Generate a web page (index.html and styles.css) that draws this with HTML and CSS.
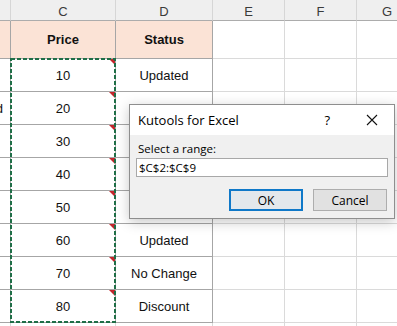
FILE: index.html
```html
<!DOCTYPE html>
<html lang="en">
<head>
    <meta charset="UTF-8">
    <title>Kutools - Select a range</title>
    <link rel="stylesheet" href="styles.css">
</head>
<body>
    <div class="sheet">
        <div class="grid">
            <!-- column headers -->
            <div class="colhead"></div>
            <div class="colhead">C</div>
            <div class="colhead">D</div>
            <div class="colhead">E</div>
            <div class="colhead">F</div>
            <div class="colhead last">G</div>

            <!-- row 1 -->
            <div class="cell th"></div>
            <div class="cell th">Price</div>
            <div class="cell th">Status</div>
            <div class="cell"></div>
            <div class="cell"></div>
            <div class="cell last"></div>

            <!-- rows 2-9 (D3:D6 sit under the dialog) -->
            <div class="cell tb"></div>
            <div class="cell tb price">10<span class="note"></span></div>
            <div class="cell tb status">Updated</div>
            <div class="cell"></div><div class="cell"></div><div class="cell last"></div>

            <div class="cell tb clip">Keyboard</div>
            <div class="cell tb price">20<span class="note"></span></div>
            <div class="cell tb status"></div>
            <div class="cell"></div><div class="cell"></div><div class="cell last"></div>

            <div class="cell tb"></div>
            <div class="cell tb price">30<span class="note"></span></div>
            <div class="cell tb status"></div>
            <div class="cell"></div><div class="cell"></div><div class="cell last"></div>

            <div class="cell tb"></div>
            <div class="cell tb price">40<span class="note"></span></div>
            <div class="cell tb status"></div>
            <div class="cell"></div><div class="cell"></div><div class="cell last"></div>

            <div class="cell tb"></div>
            <div class="cell tb price">50<span class="note"></span></div>
            <div class="cell tb status"></div>
            <div class="cell"></div><div class="cell"></div><div class="cell last"></div>

            <div class="cell tb"></div>
            <div class="cell tb price">60<span class="note"></span></div>
            <div class="cell tb status">Updated</div>
            <div class="cell"></div><div class="cell"></div><div class="cell last"></div>

            <div class="cell tb"></div>
            <div class="cell tb price">70<span class="note"></span></div>
            <div class="cell tb status">No Change</div>
            <div class="cell"></div><div class="cell"></div><div class="cell last"></div>

            <div class="cell tb"></div>
            <div class="cell tb price">80<span class="note"></span></div>
            <div class="cell tb status">Discount</div>
            <div class="cell"></div><div class="cell"></div><div class="cell last"></div>

            <!-- partial row 10 -->
            <div class="cell"></div>
            <div class="cell"></div>
            <div class="cell"></div>
            <div class="cell"></div><div class="cell"></div><div class="cell last"></div>
        </div>

        <!-- copy marquee around C2:C9 -->
        <svg class="marquee" width="106" height="265" viewBox="0 0 106 265">
            <rect x="1" y="1" width="104" height="263" fill="none" stroke="#1f6e47" stroke-width="2" stroke-dasharray="4 2"/>
        </svg>

        <div class="dialog">
            <div class="dialog-title">
                <span class="title-text">Kutools for Excel</span>
                <span class="help">?</span>
                <svg class="close" width="12" height="12" viewBox="0 0 12 12">
                    <path d="M1 1 L11 11 M11 1 L1 11" stroke="#111" stroke-width="1.1" fill="none"/>
                </svg>
            </div>
            <div class="dialog-body">
                <div class="label">Select a range:</div>
                <div class="range-input">$C$2:$C$9</div>
                <div class="buttons">
                    <button class="btn default">OK</button>
                    <button class="btn">Cancel</button>
                </div>
            </div>
        </div>
    </div>
</body>
</html>
```

FILE: styles.css
```css
body {
    margin: 0;
    background: #fff;
    overflow: hidden;
}
.sheet {
    position: relative;
    width: 397px;
    height: 326px;
    overflow: hidden;
    font-family: "Liberation Sans", Arial, sans-serif;
    font-size: 13px;
    color: #111;
}
.grid {
    display: grid;
    grid-template-columns: 11px 105px 97px 72px 72px 60px;
    grid-template-rows: 21px 38px repeat(8, 33px) 33px;
}
.colhead {
    box-sizing: border-box;
    background: #efefef;
    border-right: 1px solid #d6d6d6;
    border-bottom: 1px solid #acacac;
    color: #3a3a3a;
    display: flex;
    align-items: flex-end;
    justify-content: center;
    padding-bottom: 1px;
    font-size: 13px;
}
.cell {
    box-sizing: border-box;
    border-right: 1px solid #dadada;
    border-bottom: 1px solid #dadada;
    display: flex;
    align-items: center;
    justify-content: center;
    position: relative;
    white-space: nowrap;
    overflow: hidden;
}
.last {
    border-right: none;
}
.th {
    background: #fbe3d6;
    font-weight: bold;
    border-right-color: #a6a6a6;
    border-bottom-color: #a6a6a6;
}
.tb {
    border-right-color: #a6a6a6;
    border-bottom-color: #a6a6a6;
}
.clip {
    justify-content: flex-end;
    padding-right: 7px;
}
.note {
    position: absolute;
    top: 0;
    right: 0;
    width: 0;
    height: 0;
    border-top: 6px solid #c3262c;
    border-left: 6px solid transparent;
}
.marquee {
    position: absolute;
    left: 10px;
    top: 58px;
}
.dialog {
    position: absolute;
    left: 129px;
    top: 104px;
    width: 266px;
    height: 115px;
    box-sizing: border-box;
    border: 1px solid #8e8e8e;
    background: #f0f0f0;
    box-shadow: 0 3px 12px rgba(0, 0, 0, 0.22);
    font-family: "Open Sans", "Noto Sans", sans-serif;
    color: #000;
}
.dialog-title {
    height: 30px;
    background: #fff;
    display: flex;
    align-items: center;
    padding-left: 8px;
    font-size: 13px;
}
.title-text {
    flex: 1;
}
.help {
    font-size: 13px;
    margin-right: 36px;
}
.close {
    margin-right: 16px;
}
.dialog-body {
    padding: 5px 6px 0 6px;
}
.label {
    font-size: 11.5px;
    padding-left: 2px;
    height: 18px;
    line-height: 18px;
}
.range-input {
    box-sizing: border-box;
    height: 19px;
    background: #fff;
    border: 1px solid #a8a8a8;
    font-size: 11.5px;
    line-height: 17px;
    padding-left: 2px;
}
.buttons {
    display: flex;
    justify-content: flex-end;
    gap: 10px;
    margin-top: 12px;
    padding-right: 1px;
}
.btn {
    box-sizing: border-box;
    width: 74px;
    height: 22px;
    background: #e1e1e1;
    border: 1px solid #adadad;
    font-family: "Open Sans", "Noto Sans", sans-serif;
    font-size: 12px;
    color: #000;
    padding: 0;
}
.btn.default {
    border: 2px solid #0f78c8;
    background: #e3e8ec;
}
```
